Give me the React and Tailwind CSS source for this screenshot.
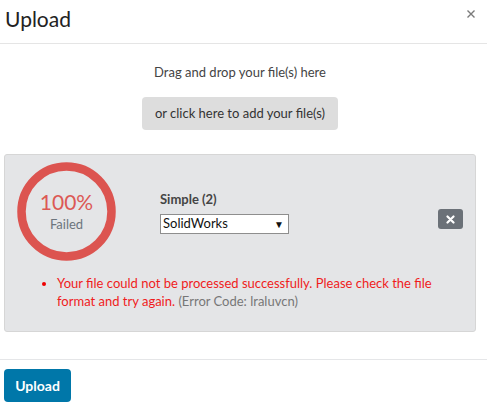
export default function App() {
  return (
    <div className="w-[487px] h-[409px] bg-white font-['Lato','Liberation_Sans',sans-serif] text-[#333] overflow-hidden">
      <div className="h-[44px] border-b border-[#e5e5e5] flex items-start justify-between pl-[5px] pr-[12px]">
        <h1 className="text-[21px] leading-[25px] mt-[6px] text-[#222]">Upload</h1>
        <button className="mt-[10px] w-[8px] h-[8px]">
          <svg width="8" height="8" viewBox="0 0 8 8" className="block">
            <path d="M0.5 0.5 L7.5 7.5 M7.5 0.5 L0.5 7.5" stroke="#7a7a7a" strokeWidth="1.4" />
          </svg>
        </button>
      </div>

      <div className="w-[480px] pt-[20px] flex flex-col items-center">
        <p className="text-[13px] leading-[16px] text-[#444]">Drag and drop your file(s) here</p>
        <button className="mt-[17px] w-[196px] h-[33px] rounded-[4px] bg-[#dddddd] text-[13px] text-[#333]">
          or click here to add your file(s)
        </button>
      </div>

      <div className="mt-[24px] ml-[4px] w-[472px] h-[178px] rounded-[3px] border border-[#d6d6d6] bg-[#e4e5e7]">
        <div className="flex items-start pt-[7px] pl-[12px]">
          <div className="relative w-[99px] h-[99px] shrink-0">
            <svg width="99" height="99" viewBox="0 0 99 99" className="absolute inset-0">
              <circle cx="49.5" cy="49.5" r="45" fill="none" stroke="#dc5450" strokeWidth="8.5" />
            </svg>
            <div className="absolute inset-0 flex flex-col items-center justify-center">
              <span className="text-[21px] leading-[24px] text-[#dc5955] mt-[-2px]">100%</span>
              <span className="text-[13px] leading-[16px] text-[#6c757d] mt-[2px]">Failed</span>
            </div>
          </div>
          <div className="ml-[44px] mt-[29px]">
            <div className="text-[13px] font-bold text-[#444] leading-[16px]">Simple (2)</div>
            <div className="mt-[7px] w-[129px] h-[20px] bg-white border border-[#8e8e8e] flex items-center justify-between pl-[2px] pr-[4px] text-[13px] text-[#111]">
              <span>SolidWorks</span>
              <span className="text-[10px]">▼</span>
            </div>
          </div>
          <div className="ml-auto mr-[12px] mt-[47px] w-[25px] h-[20px] rounded-[3px] bg-[#6b7178] flex items-center justify-center">
            <svg width="9" height="9" viewBox="0 0 9 9">
              <path d="M1.5 1.5 L7.5 7.5 M7.5 1.5 L1.5 7.5" stroke="white" strokeWidth="2.2" strokeLinecap="round" />
            </svg>
          </div>
        </div>
        <ul className="mt-[13px] pl-[52px] pr-[40px] text-[13px] leading-[18px] list-disc">
          <li className="text-[#f01c1c] marker:text-[#e00]">
            Your file could not be processed successfully. Please check the file format and try again.{" "}
            <span className="text-[#777]">(Error Code: lraluvcn)</span>
          </li>
        </ul>
      </div>

      <div className="mt-[27px] border-t border-[#e5e6e8] pt-[9px] pl-[4px]">
        <button className="w-[67px] h-[33px] rounded-[4px] bg-[#0077a9] text-white text-[14px] font-bold">Upload</button>
      </div>
    </div>
  );
}
